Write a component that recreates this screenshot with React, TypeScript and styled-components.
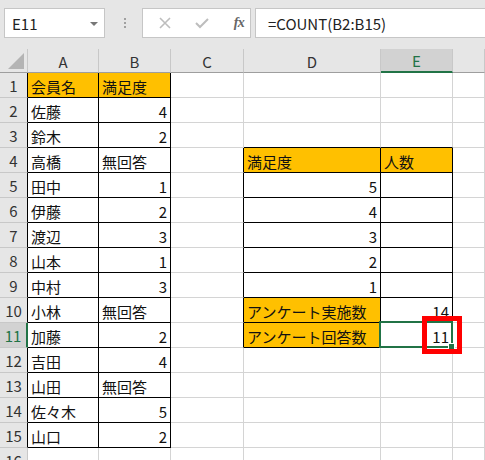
import { Fragment } from 'react';
import styled, { createGlobalStyle } from 'styled-components';

const GlobalStyle = createGlobalStyle`
  html, body {
    margin: 0;
    padding: 0;
    background: #fff;
  }
  body {
    font-family: "Noto Sans CJK JP", "Noto Sans", sans-serif;
    color: #000;
  }
`;

const FONT = `"Noto Sans CJK JP", "Noto Sans", sans-serif`;
const GRID = '#d4d4d4';
const BLACK = '#000';
const ORANGE = '#ffc000';
const GREEN = '#217346';

const Window = styled.div`
  width: 485px;
  height: 460px;
  overflow: hidden;
  background: #fff;
`;

const FormulaBar = styled.div`
  height: 49px;
  background: #e6e6e6;
  display: flex;
  align-items: flex-start;
  padding: 8px 0 0 4px;
  box-sizing: border-box;
  gap: 4px;
`;

const NameBox = styled.div`
  width: 101px;
  height: 30px;
  box-sizing: border-box;
  background: #fff;
  border: 1px solid #c6c6c6;
  display: flex;
  align-items: center;
  justify-content: space-between;
  padding: 0 6px 0 7px;
  font-family: ${FONT};
  font-size: 15px;
  color: #222;
`;

const DropArrow = styled.span`
  width: 0;
  height: 0;
  border-left: 4px solid transparent;
  border-right: 4px solid transparent;
  border-top: 4px solid #777;
  margin-top: 1px;
`;

const Grip = styled.div`
  width: 27px;
  height: 30px;
  display: flex;
  flex-direction: column;
  align-items: center;
  justify-content: center;
  gap: 2px;
  margin-left: 2px;

  span {
    width: 2px;
    height: 2px;
    background: #a0a0a0;
  }
`;

const ButtonBox = styled.div`
  width: 109px;
  height: 30px;
  box-sizing: border-box;
  background: #fff;
  border: 1px solid #c6c6c6;
  display: flex;
  align-items: center;
  padding: 0 0 0 11px;
  gap: 15px;
`;

const IconSlot = styled.span`
  width: 22px;
  height: 22px;
  display: inline-flex;
  align-items: center;
  justify-content: center;
`;

const Fx = styled.span`
  font-family: "Liberation Serif", serif;
  font-style: italic;
  font-weight: bold;
  font-size: 14px;
  color: #666;
  letter-spacing: -0.5px;
`;

const FormulaInput = styled.div`
  flex: 1;
  height: 30px;
  box-sizing: border-box;
  background: #fff;
  border: 1px solid #c6c6c6;
  border-right: none;
  display: flex;
  align-items: center;
  padding-left: 12px;
  font-family: ${FONT};
  font-size: 15px;
  color: #222;
`;

const Sheet = styled.div`
  display: grid;
  grid-template-columns: 28px 71px 72px 73px 137px 72px 1fr;
  grid-auto-rows: 25px;
  grid-template-rows: 24px;
`;

const Corner = styled.div`
  background: #e6e6e6;
  border-right: 1px solid #c8c8c8;
  border-bottom: 1px solid #9e9e9e;
  box-sizing: border-box;
  display: flex;
  align-items: flex-end;
  justify-content: flex-end;
  padding: 0 3px 3px 0;
`;

const Triangle = styled.span`
  width: 0;
  height: 0;
  border-left: 16px solid transparent;
  border-bottom: 16px solid #b4b4b4;
`;

const ColHead = styled.div<{ $active?: boolean }>`
  background: ${(p) => (p.$active ? '#d2d2d2' : '#e6e6e6')};
  color: ${(p) => (p.$active ? GREEN : '#333')};
  border-right: 1px solid #c8c8c8;
  border-bottom: ${(p) => (p.$active ? `2px solid ${GREEN}` : '1px solid #9e9e9e')};
  box-sizing: border-box;
  display: flex;
  align-items: center;
  justify-content: center;
  font-family: ${FONT};
  font-size: 15px;
  padding-top: 1px;
`;

const RowHead = styled.div<{ $active?: boolean; $edge: string }>`
  background: ${(p) => (p.$active ? '#d2d2d2' : '#e6e6e6')};
  color: ${(p) => (p.$active ? GREEN : '#333')};
  border-right: ${(p) => (p.$active ? `2px solid ${GREEN}` : `1px solid ${p.$edge}`)};
  border-bottom: 1px solid #c8c8c8;
  box-sizing: border-box;
  display: flex;
  align-items: center;
  justify-content: center;
  font-family: ${FONT};
  font-size: 15px;
  padding-top: 1px;
`;

const Cell = styled.div<{
  $fill?: string;
  $num?: boolean;
  $right: string;
  $bottom: string;
  $raised?: boolean;
}>`
  position: relative;
  z-index: ${(p) => (p.$raised ? 2 : 'auto')};
  background: ${(p) => p.$fill || '#fff'};
  border-right: 1px solid ${(p) => p.$right};
  border-bottom: 1px solid ${(p) => p.$bottom};
  box-sizing: border-box;
  display: flex;
  align-items: center;
  justify-content: ${(p) => (p.$num ? 'flex-end' : 'flex-start')};
  padding: 2px 3px 0 3px;
  font-family: ${FONT};
  font-size: 15px;
  color: #111;
  white-space: nowrap;
`;

const Selection = styled.div`
  position: absolute;
  left: -2px;
  top: -2px;
  right: -1px;
  bottom: -1px;
  border: 2px solid ${GREEN};
  pointer-events: none;
`;

const FillHandle = styled.span`
  position: absolute;
  right: -4px;
  bottom: -4px;
  width: 5px;
  height: 5px;
  background: ${GREEN};
  border: 1px solid #fff;
`;

const Highlight = styled.div`
  position: absolute;
  left: 41px;
  top: -7px;
  width: 40px;
  height: 38px;
  box-sizing: border-box;
  border: 5px solid #f00;
  pointer-events: none;
`;

type Value = { text: string; num?: boolean; fill?: boolean };

const data: Record<string, Value> = {
  A1: { text: '会員名', fill: true },
  B1: { text: '満足度', fill: true },
  A2: { text: '佐藤' }, B2: { text: '4', num: true },
  A3: { text: '鈴木' }, B3: { text: '2', num: true },
  A4: { text: '高橋' }, B4: { text: '無回答' },
  A5: { text: '田中' }, B5: { text: '1', num: true },
  A6: { text: '伊藤' }, B6: { text: '2', num: true },
  A7: { text: '渡辺' }, B7: { text: '3', num: true },
  A8: { text: '山本' }, B8: { text: '1', num: true },
  A9: { text: '中村' }, B9: { text: '3', num: true },
  A10: { text: '小林' }, B10: { text: '無回答' },
  A11: { text: '加藤' }, B11: { text: '2', num: true },
  A12: { text: '吉田' }, B12: { text: '4', num: true },
  A13: { text: '山田' }, B13: { text: '無回答' },
  A14: { text: '佐々木' }, B14: { text: '5', num: true },
  A15: { text: '山口' }, B15: { text: '2', num: true },
  D4: { text: '満足度', fill: true },
  E4: { text: '人数', fill: true },
  D5: { text: '5', num: true },
  D6: { text: '4', num: true },
  D7: { text: '3', num: true },
  D8: { text: '2', num: true },
  D9: { text: '1', num: true },
  D10: { text: 'アンケート実施数', fill: true },
  E10: { text: '14', num: true },
  D11: { text: 'アンケート回答数', fill: true },
  E11: { text: '11', num: true },
};

const cols = ['A', 'B', 'C', 'D', 'E', 'F'];
const rows = Array.from({ length: 16 }, (_, i) => i + 1);

function inTable(col: string, row: number) {
  const c = cols.indexOf(col);
  if (c >= 0 && c <= 1 && row >= 1 && row <= 15) return true;
  if (c >= 3 && c <= 4 && row >= 4 && row <= 11) return true;
  return false;
}

export default function App() {
  return (
    <Window>
      <GlobalStyle />
      <FormulaBar>
        <NameBox>
          E11
          <DropArrow />
        </NameBox>
        <Grip>
          <span />
          <span />
          <span />
        </Grip>
        <ButtonBox>
          <IconSlot>
            <svg width="12" height="12" viewBox="0 0 12 12">
              <path d="M1 1 L11 11 M11 1 L1 11" stroke="#bdbdbd" strokeWidth="1.6" fill="none" />
            </svg>
          </IconSlot>
          <IconSlot>
            <svg width="14" height="12" viewBox="0 0 14 12">
              <path d="M1 6 L5 10 L13 2" stroke="#bdbdbd" strokeWidth="2" fill="none" />
            </svg>
          </IconSlot>
          <IconSlot>
            <Fx>fx</Fx>
          </IconSlot>
        </ButtonBox>
        <FormulaInput>=COUNT(B2:B15)</FormulaInput>
      </FormulaBar>
      <Sheet>
        <Corner>
          <Triangle />
        </Corner>
        {cols.map((c) => (
          <ColHead key={c} $active={c === 'E'}>
            {c === 'F' ? '' : c}
          </ColHead>
        ))}
        {rows.map((r) => (
          <Fragment key={r}>
            <RowHead $active={r === 11} $edge={inTable('A', r) ? BLACK : '#c8c8c8'}>
              {r}
            </RowHead>
            {cols.map((c, ci) => {
              const key = `${c}${r}`;
              const v = data[key];
              const here = inTable(c, r);
              const right = here || inTable(cols[ci + 1] ?? '', r) ? BLACK : GRID;
              const bottom = here || inTable(c, r + 1) ? BLACK : GRID;
              const selected = key === 'E11';
              return (
                <Cell
                  key={key}
                  $fill={v?.fill ? ORANGE : undefined}
                  $num={v?.num}
                  $right={right}
                  $bottom={bottom}
                  $raised={selected}
                >
                  {v?.text}
                  {selected && (
                    <>
                      <Selection>
                        <FillHandle />
                      </Selection>
                      <Highlight />
                    </>
                  )}
                </Cell>
              );
            })}
          </Fragment>
        ))}
      </Sheet>
    </Window>
  );
}
